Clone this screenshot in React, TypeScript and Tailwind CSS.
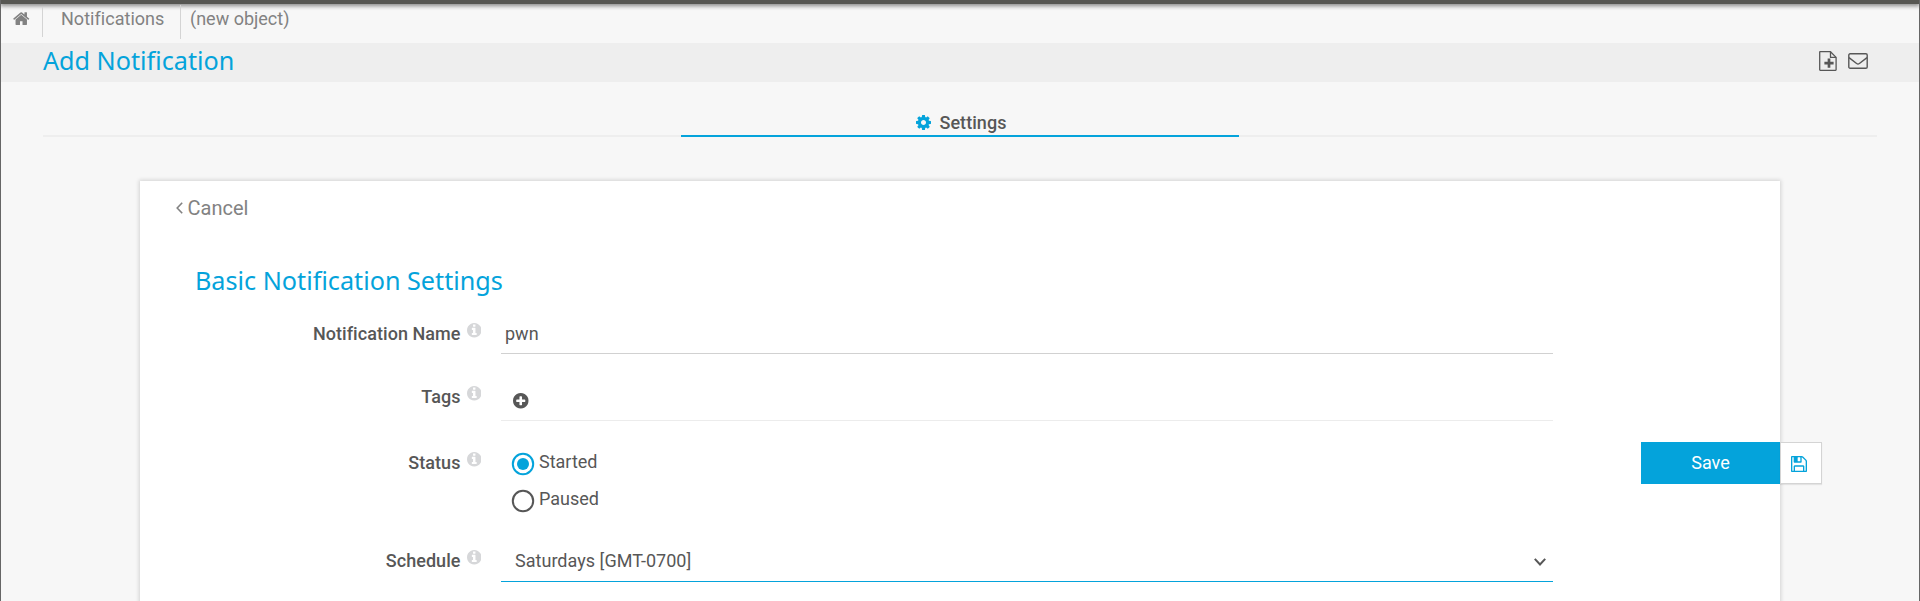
import React from "react";

const CIRCLE =
  "M1664 896q0 209-103 385.5t-279.5 279.5-385.5 103-385.5-103-279.5-279.5-103-385.5 103-385.5 279.5-279.5 385.5-103 385.5 103 279.5 279.5 103 385.5z";

const icons = {
  home: "M1472 992v480q0 26-19 45t-45 19h-384v-384h-256v384h-384q-26 0-45-19t-19-45v-480q0-1 .5-3t.5-3l575-474 575 474q1 2 1 6zm223-69l-62 74q-8 9-21 11h-3q-13 0-21-7l-692-577-692 577q-12 8-24 7-13-2-21-11l-62-74q-8-10-7-23.5t11-21.5l719-599q32-26 76-26t76 26l244 204v-195q0-14 9-23t23-9h192q14 0 23 9t9 23v408l219 182q10 8 11 21.5t-7 23.5z",
  cog: "M1152 896q0-106-75-181t-181-75-181 75-75 181 75 181 181 75 181-75 75-181zm512-109v222q0 12-8 23t-20 13l-185 28q-19 54-39 91 35 50 107 138 10 12 10 25t-9 23q-27 37-99 108t-94 71q-12 0-26-9l-138-108q-44 23-91 38-16 136-29 186-7 28-36 28h-222q-14 0-24.5-8.5t-11.5-21.5l-28-184q-49-16-90-37l-141 107q-10 9-25 9-14 0-25-11-126-114-165-168-7-10-7-23 0-12 8-23 15-21 51-66.5t54-70.5q-27-50-41-99l-183-27q-13-2-21-12.5t-8-23.5v-222q0-12 8-23t19-13l186-28q14-46 39-92-40-57-107-138-10-12-10-24 0-10 9-23 26-36 98.5-107.5t94.5-71.5q13 0 26 10l138 107q44-23 91-38 16-136 29-186 7-28 36-28h222q14 0 24.5 8.5t11.5 21.5l28 184q49 16 90 37l142-107q9-9 24-9 13 0 25 10 129 119 165 170 7 8 7 22 0 12-8 23-15 21-51 66.5t-54 70.5q26 50 41 98l183 28q13 2 21 12.5t8 23.5z",
  info:
    "M1152 1376v-160q0-14-9-23t-23-9h-96v-512q0-14-9-23t-23-9h-320q-14 0-23 9t-9 23v160q0 14 9 23t23 9h96v320h-96q-14 0-23 9t-9 23v160q0 14 9 23t23 9h448q14 0 23-9t9-23zM1024 480v-160q0-14-9-23t-23-9h-192q-14 0-23 9t-9 23v160q0 14 9 23t23 9h192q14 0 23-9t9-23z" +
    CIRCLE,
  plus:
    "M1344 960v-128q0-26-19-45t-45-19h-256v-256q0-26-19-45t-45-19h-128q-26 0-45 19t-19 45v256h-256q-26 0-45 19t-19 45v128q0 26 19 45t45 19h256v256q0 26 19 45t45 19h128q26 0 45-19t19-45v-256h256q26 0 45-19t19-45z" +
    CIRCLE,
  floppy:
    "M512 1536h768v-384h-768v384zm896 0h128v-896q0-14-10-38.5t-20-34.5l-281-281q-10-10-34-20t-39-10v416q0 40-28 68t-68 28h-576q-40 0-68-28t-28-68v-416h-128v1280h128v-416q0-40 28-68t68-28h832q40 0 68 28t28 68v416zm-384-928v-320q0-13-9.5-22.5t-22.5-9.5h-192q-13 0-22.5 9.5t-9.5 22.5v320q0 13 9.5 22.5t22.5 9.5h192q13 0 22.5-9.5t9.5-22.5zm640 32v928q0 40-28 68t-68 28h-1344q-40 0-68-28t-28-68v-1344q0-40 28-68t68-28h928q40 0 88 20t76 48l280 280q28 28 48 76t20 88z",
};

// Glyphs share a 1536-unit square, inset by 128 units in a 1792 grid.
function Icon({ name, className, viewBox = "128 128 1536 1536" }: { name: keyof typeof icons; className: string; viewBox?: string }) {
  return (
    <svg viewBox={viewBox} fill="currentColor" fillRule="evenodd" className={`shrink-0 ${className}`}>
      <path d={icons[name]} />
    </svg>
  );
}

function Label({ text }: { text: string }) {
  return (
    <div className="flex w-[341px] shrink-0 items-start justify-end">
      <span className="text-[18px] leading-6 font-medium tracking-[0.05px]">{text}</span>
      <Icon name="info" className="mt-[1px] ml-[6px] h-[14.5px] w-[14.5px] text-[#d6d7d9]" />
    </div>
  );
}

function Radio({ label, checked = false }: { label: string; checked?: boolean }) {
  return (
    <div className="flex h-[37px] items-start">
      <svg viewBox="0 0 24 24" className={checked ? "mt-[2px] h-6 w-6 text-[#04a3db]" : "mt-[2px] h-6 w-6 text-[#575757]"}>
        <circle cx="12" cy="12" r="10.2" fill="none" stroke="currentColor" strokeWidth="2" />
        {checked && <circle cx="12" cy="12" r="6" fill="currentColor" />}
      </svg>
      <span className="ml-[4px] text-[18px] leading-6">{label}</span>
    </div>
  );
}

export default function App() {
  return (
    <div className="flex h-[601px] w-full flex-col overflow-hidden border-x border-[#666] bg-[#f7f7f7] font-[Roboto,sans-serif] text-[#575757]">
      <div className="h-1 shrink-0 bg-[#575753] shadow-[0_1px_4px_1px_rgba(0,0,0,0.45)]" />

      <nav className="flex h-[39px] shrink-0 items-start text-[18px] leading-6 text-[#828282]">
        <Icon name="home" viewBox="89 224 1614 1312" className="mt-[8px] ml-[12px] h-[13px] w-[16.5px]" />
        <div className="mt-[3px] ml-[12.5px] h-[30px] w-px bg-[#d4d4d4]" />
        <span className="mt-[3px] ml-[18px] w-[119px] tracking-[0.03px]">Notifications</span>
        <div className="mt-px h-[34px] w-px bg-[#d4d4d4]" />
        <span className="mt-[3px] ml-[9px]">(new object)</span>
      </nav>

      <header className="flex h-[39px] shrink-0 items-center justify-between bg-[#eee] pr-[51px] pl-[42px]">
        <h1 className="pb-[5px] font-['Noto_Sans',sans-serif] text-[25.2px] leading-8 text-[#04a3db]">Add Notification</h1>
        <div className="flex items-center gap-[11px] pb-[4px]">
          <svg viewBox="0 0 18 20" className="h-5 w-[18px]" fill="none" stroke="currentColor" strokeWidth="1.3" strokeLinejoin="round">
            <path d="M11.5.7H1.2Q.7.7.7 1.2v17.6q0 .5.5.5h15.4q.5 0 .5-.5V6.4Z" />
            <path d="M11.5.7v5.7h5.6" />
            <path d="M10 7.5v9.3M5.4 12.2h9.2" strokeWidth="2.7" />
          </svg>
          <svg viewBox="0 0 20 16" className="h-4 w-5" fill="none" stroke="currentColor" strokeWidth="1.4" strokeLinejoin="round">
            <rect x=".8" y=".8" width="18.4" height="14.4" rx="1.3" />
            <path d="M1 4.6l7.6 5.9q1.4 1 2.8 0L19 4.6" />
          </svg>
        </div>
      </header>

      <div className="mx-[42px] flex h-[55px] shrink-0 justify-center border-b-2 border-[#eee]">
        <div className="flex h-[55px] w-[558px] items-end justify-center border-b-2 border-[#04a3db] pl-[3px] text-[18px] leading-6 font-medium">
          <Icon name="cog" className="mr-[8px] mb-[5px] h-[15px] w-[15px] text-[#04a3db]" />
          <span className="tracking-[0.05px]">Settings</span>
        </div>
      </div>

      <main className="mx-[139px] mt-[44px] flex h-[430px] shrink-0 bg-white shadow-[0_0_4px_1px_rgba(0,0,0,0.15)]">
        <div className="flex w-[1413px] shrink-0 flex-col">
          <div className="mt-[13px] ml-[36px] flex h-7 items-center text-[20px] leading-7 text-[#828282]">
            <svg viewBox="0 0 7 12" className="mr-[4.5px] h-[12px] w-[7px]" fill="none" stroke="currentColor" strokeWidth="1.6">
              <path d="M6.2.8L1.2 6l5 5.2" />
            </svg>
            Cancel
          </div>
          <h2 className="mt-[40px] ml-[55px] h-9 font-['Noto_Sans',sans-serif] text-[25.2px] leading-9 text-[#04a3db]">Basic Notification Settings</h2>

          <div className="mt-[24px] flex h-[51px]">
            <Label text="Notification Name" />
            <div className="ml-[20px] h-[32px] flex-1 border-b border-[#d1d1d1] pl-1 text-[18px] leading-6">pwn</div>
          </div>
          <div className="mt-[12px] flex h-[54px]">
            <Label text="Tags" />
            <div className="ml-[20px] h-[36px] flex-1 border-b border-[#ececec] pt-[8px] pl-[12px]">
              <Icon name="plus" className="h-[15.5px] w-[15.5px]" />
            </div>
          </div>
          <div className="mt-[12px] flex h-[98px]">
            <Label text="Status" />
            <div className="-mt-px ml-[30px] flex flex-col">
              <Radio label="Started" checked />
              <Radio label="Paused" />
            </div>
          </div>
          <div className="flex">
            <Label text="Schedule" />
            <div className="ml-[20px] flex h-[33px] flex-1 items-start justify-between border-b border-[#04a3db] pr-[7px] pl-[14px] text-[18px] leading-6">
              <span className="tracking-[0.03px]">Saturdays [GMT-0700]</span>
              <svg viewBox="0 0 12 8" className="mt-[9px] h-2 w-3" fill="none" stroke="currentColor" strokeWidth="2">
                <path d="M.8.8L6 6.5 11.2.8" />
              </svg>
            </div>
          </div>
        </div>

        <div className="mt-[261px] ml-[88px] flex h-[42px] shrink-0">
          <button className="w-[139px] bg-[#04a3db] text-[18px] leading-6 text-white">Save</button>
          <button className="flex w-[42px] items-center justify-center border border-[#d4d4d4] bg-white pt-[2px] pr-[4px] text-[#04a3db] shadow-[0_1px_1px_rgba(0,0,0,0.08)]">
            <Icon name="floppy" className="h-4 w-4" />
          </button>
        </div>
      </main>
    </div>
  );
}
